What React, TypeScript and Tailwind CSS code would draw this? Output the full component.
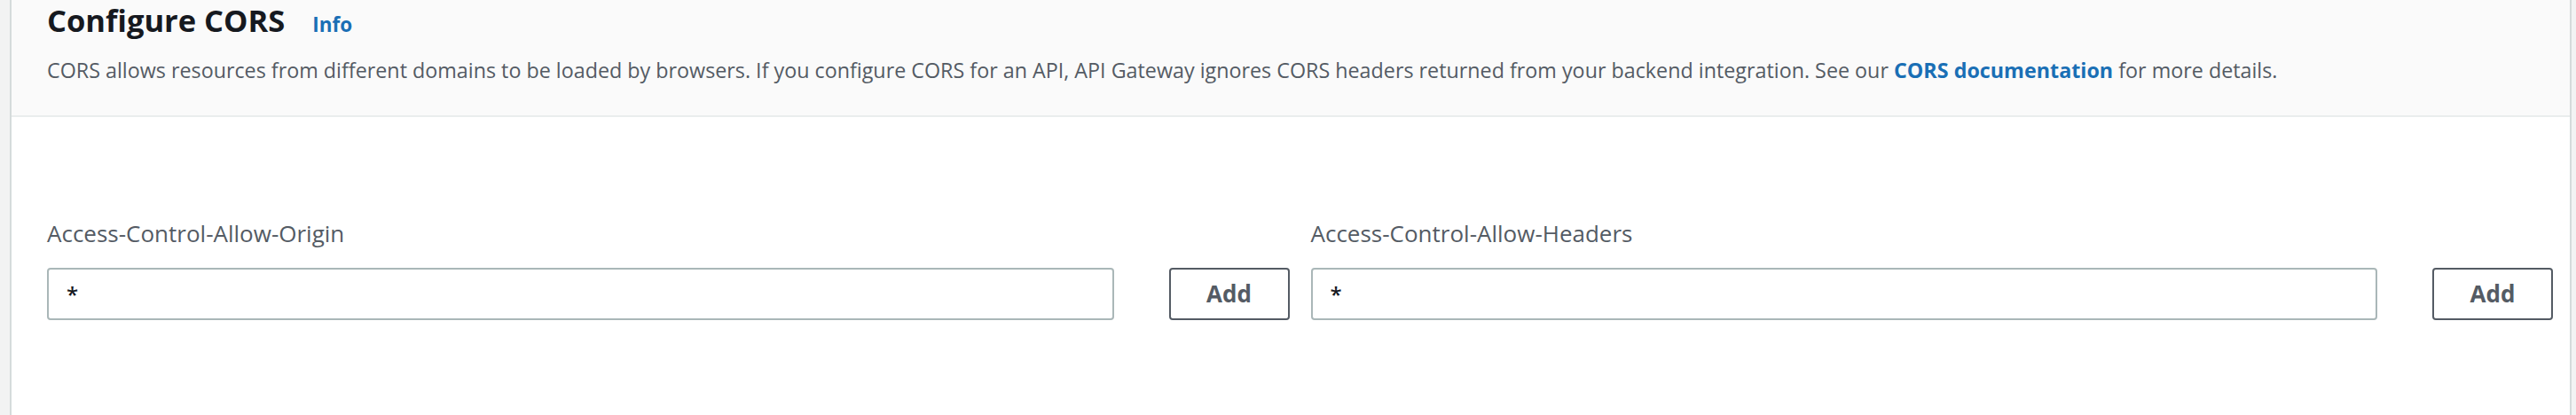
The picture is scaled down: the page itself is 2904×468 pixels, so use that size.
import React from 'react';

const font = { fontFamily: '"Open Sans", "Noto Sans", sans-serif' };

function HeaderField({ label }: { label: string }) {
    return (
        <div className="flex flex-col">
            <label className="text-[26px] leading-[34px] text-[#545b64]">{label}</label>
            <div className="mt-[22px] flex items-center gap-[62px]">
                <div className="flex h-[59px] flex-1 items-center rounded-[4px] border-2 border-[#aab7b8] bg-white px-[20px]">
                    <span className="text-[24px] font-semibold text-[#16191f]">*</span>
                </div>
                <button className="h-[59px] w-[136px] rounded-[4px] border-2 border-[#545b64] bg-white text-[26px] font-bold text-[#545b64]">
                    Add
                </button>
            </div>
        </div>
    );
}

export default function App() {
    return (
        <div style={font} className="h-[468px] w-[2904px] bg-[#f2f3f3] pl-[11px] pr-[5px]">
            <div className="flex h-full flex-col border-x-2 border-[#d5dbdb] bg-white">
                {/* section header */}
                <div className="h-[132px] border-b-2 border-[#eaeded] bg-[#fafafa] px-[40px] pt-[3px]">
                    <div className="flex items-baseline gap-[31px]">
                        <h2 className="text-[34.5px] font-bold leading-[40px] text-[#16191f]">Configure CORS</h2>
                        <a className="text-[22.5px] font-bold text-[#1a6fb5]">Info</a>
                    </div>
                    <p className="mt-[18px] text-[23.3px] leading-[32px] text-[#545b64]">
                        CORS allows resources from different domains to be loaded by browsers. If you configure CORS for an API, API Gateway ignores CORS headers returned from your backend integration. See our{' '}
                        <a className="font-bold text-[#1a6fb5]">CORS documentation</a> for more details.
                    </p>
                </div>

                <div className="grid grid-cols-2 gap-x-[24px] pl-[40px] pr-[19px] pt-[114px]">
                    <HeaderField label="Access-Control-Allow-Origin" />
                    <HeaderField label="Access-Control-Allow-Headers" />
                </div>
            </div>
        </div>
    );
}
